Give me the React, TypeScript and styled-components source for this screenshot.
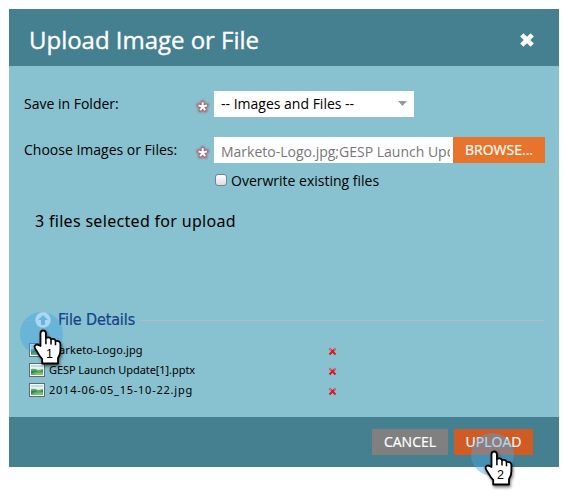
import React from "react";
import styled, { createGlobalStyle } from "styled-components";

const GlobalStyle = createGlobalStyle`
  * { box-sizing: border-box; }
  body {
    margin: 0;
    background: #fff;
    font-family: "Open Sans", "Noto Sans", sans-serif;
    color: #000;
  }
`;

const Page = styled.main`
  position: relative;
  width: 568px;
  height: 496px;
  padding: 9px;
  overflow: hidden;
`;

const Dialog = styled.section`
  display: flex;
  flex-direction: column;
  width: 550px;
  height: 458px;
  background: #88c1cf;
`;

const Header = styled.header`
  display: flex;
  align-items: center;
  justify-content: space-between;
  height: 57px;
  padding: 4px 25px 0 20px;
  background: #458091;
  color: #fff;
`;

const Title = styled.h1`
  margin: 0;
  font-size: 24px;
  line-height: 32px;
  font-weight: 400;
  letter-spacing: -0.02px;
  -webkit-text-stroke: 0.35px #fff;
`;

const IconButton = styled.button`
  display: flex;
  padding: 0;
  border: 0;
  background: none;
`;

const Body = styled.div`
  flex: 1;
  padding: 25px 14px 0 15px;
`;

const FormRow = styled.div`
  display: flex;
  height: 26px;
  margin-bottom: 20px;
`;

const Label = styled.label`
  width: 172px;
  font-size: 14px;
  line-height: 26px;
  white-space: nowrap;
`;

const Required = styled.span`
  width: 18px;
  padding-top: 8px;
  line-height: 0;
`;

const Select = styled.div`
  display: flex;
  align-items: center;
  justify-content: space-between;
  width: 200px;
  padding: 0 7px 1px;
  background: #fff;
  font-size: 14px;
`;

const FileInput = styled.div`
  width: 239px;
  padding: 3px 3px 0 7px;
  background: #fff;
`;

const FileValue = styled.div`
  overflow: hidden;
  color: #777;
  font-size: 14px;
  line-height: 23px;
  white-space: nowrap;
`;

const Button = styled.button<{ $tone: string; $width: number }>`
  width: ${(p) => p.$width}px;
  height: 26px;
  padding: 0;
  border: 0;
  background: ${(p) => p.$tone};
  color: #fff;
  font: 14px/26px "Open Sans", sans-serif;
  white-space: nowrap;
  -webkit-text-stroke: 0.2px #fff;
`;

const CheckRow = styled.label`
  display: flex;
  align-items: center;
  gap: 4px;
  height: 20px;
  margin: -13px 0 0 191px;
  font-size: 14px;
`;

const Checkbox = styled.span`
  width: 12px;
  height: 12px;
  border: 1px solid #73858c;
  border-radius: 3px;
  background: linear-gradient(#fff, #ddd);
`;

const Summary = styled.p`
  margin: 18px 0 0 11px;
  font: 16px/26px "Noto Sans", sans-serif;
  letter-spacing: 0.31px;
`;

const Details = styled.section`
  margin-top: 75px;
`;

const DetailsHeader = styled.div`
  display: flex;
  align-items: center;
  height: 22px;
`;

const Rule = styled.span<{ $width?: number }>`
  width: ${(p) => (p.$width ? `${p.$width}px` : "auto")};
  flex: ${(p) => (p.$width ? "none" : 1)};
  height: 1px;
  background: #b5b8c8;
`;

const DetailsTitle = styled.h2`
  margin: 0 4px 0 7px;
  color: #15428b;
  font: 16px/22px "DejaVu Sans Condensed", "DejaVu Sans", sans-serif;
  letter-spacing: -0.12px;
  -webkit-text-stroke: 0.2px #15428b;
`;

const FileList = styled.ul`
  margin: 9px 0 0 5px;
  padding: 0;
  list-style: none;
`;

const FileItem = styled.li`
  display: flex;
  align-items: center;
  height: 20px;
`;

const FileName = styled.span<{ $spacing: number }>`
  width: 280px;
  margin-left: 4px;
  font: 11px/18px "Noto Sans", sans-serif;
  letter-spacing: ${(p) => p.$spacing}px;
`;

const RemoveButton = styled(IconButton)`
  padding-top: 2px;
`;

const Footer = styled.footer`
  display: flex;
  justify-content: flex-end;
  gap: 6px;
  height: 50px;
  padding: 12px 26px 0 0;
  background: #458091;
`;

const Marker = styled.svg<{ $x: number; $y: number }>`
  position: absolute;
  left: ${(p) => p.$x}px;
  top: ${(p) => p.$y}px;
  overflow: visible;
  pointer-events: none;
`;

const SoftGlow = styled.path`
  filter: blur(1.1px);
`;

const Hand = styled.path`
  filter: drop-shadow(1px 2px 1.5px rgba(0, 0, 0, 0.5));
`;

const asterisk = "M6.7 7.7V3.3M6.7 7.7L2.5 6.4M6.7 7.7L10.9 6.4M6.7 7.7L4.2 11.3M6.7 7.7L9.2 11.3";

const RequiredMark = () => (
  <Required>
    <svg width="14" height="16" viewBox="0 0 14 16" overflow="visible">
      <g fill="none">
        <SoftGlow d={asterisk} stroke="#b83a44" strokeWidth="4" strokeLinecap="round" opacity=".8" />
        <path d={asterisk} stroke="#fff" strokeWidth="2" />
      </g>
    </svg>
  </Required>
);

const PictureIcon = () => (
  <svg width="16" height="14" viewBox="0 0 16 14">
    <rect x=".5" y=".5" width="15" height="13" fill="#fff" stroke="#626970" />
    <path fill="#b9dcf5" d="M2 2h12v4H2z" />
    <path fill="#e4f4ee" d="M2 4h12v3H2z" />
    <path fill="#62ad68" d="M2 6q4-1 7 1l5-1v6H2z" />
    <path fill="#2e874c" d="M2 8q4-1 6 0t6-1v2q-6-2-12 2z" />
    <path fill="#83c267" d="M5 12q4-3 9-2v2z" />
  </svg>
);

const DeleteIcon = () => (
  <svg width="7" height="7" viewBox="0 0 7 7" overflow="visible">
    <path d="M.5 .5l6 6M6.5 .5L.5 6.5" stroke="#df1720" strokeWidth="2" />
    <path d="M.4.4l2 2M6.6.4l-1.5 1.5" stroke="#d27681" strokeWidth="1.6" />
  </svg>
);

const ClickMarker = ({ x, y, step }: { x: number; y: number; step: number }) => (
  <Marker $x={x} $y={y} width="44" height="60" viewBox="0 0 44 60">
    <circle cx="21.5" cy="21.5" r="21.5" fill="#45a6e5" opacity=".45" />
    <Hand
      d="M20.5 34V21.3q0-2.8 2.7-2.8t2.7 2.8v4.6q4.5-1.3 5 1.3 4.1-.9 4.6 1.7 4.9-.5 4.9 3.4V38q0 4.6-2.4 8v5.5H22.2v-4.5c-3.2-2.7-4.5-6.8-6.8-10-2.4-3.6 1.3-5.6 3.5-3.7z"
      fill="#fff"
      stroke="#000"
      strokeWidth="1.8"
      strokeLinejoin="round"
    />
    <path d="M25.9 25.5v6.8M31 27v5.6M35.5 28.8v4.5" stroke="#000" strokeWidth="1.5" />
    <text x="29.4" y="46.4" textAnchor="middle" fontFamily="Liberation Sans" fontSize="12.5">
      {step}
    </text>
  </Marker>
);

const files = [
  { name: "Marketo-Logo.jpg", spacing: 0.1 },
  { name: "GESP Launch Update[1].pptx", spacing: -0.07 },
  { name: "2014-06-05_15-10-22.jpg", spacing: 0.76 },
];

export default function App() {
  return (
    <>
      <GlobalStyle />
      <Page>
        <Dialog>
          <Header>
            <Title>Upload Image or File</Title>
            <IconButton aria-label="Close">
              <svg width="14" height="14" viewBox="0 0 14 14">
                <path d="M1.8 1.8l10.4 10.4M12.2 1.8L1.8 12.2" stroke="#fff" strokeWidth="4.6" />
              </svg>
            </IconButton>
          </Header>
          <Body>
            <FormRow>
              <Label>Save in Folder:</Label>
              <RequiredMark />
              <Select>
                <span>-- Images and Files --</span>
                <svg width="9" height="5" viewBox="0 0 9 5">
                  <path d="M0 0h9L4.5 5z" fill="#999" />
                </svg>
              </Select>
            </FormRow>
            <FormRow>
              <Label>Choose Images or Files:</Label>
              <RequiredMark />
              <FileInput>
                <FileValue>Marketo-Logo.jpg;GESP Launch Update</FileValue>
              </FileInput>
              <Button $tone="#e8732b" $width={92}>BROWSE...</Button>
            </FormRow>
            <CheckRow>
              <Checkbox />
              <span>Overwrite existing files</span>
            </CheckRow>
            <Summary>3 files selected for upload</Summary>
            <Details>
              <DetailsHeader>
                <Rule $width={11} />
                <svg width="16" height="16" viewBox="0 0 16 16">
                  <circle cx="8" cy="8" r="7.7" fill="#fff" />
                  <path d="M8 3l5 5h-3v5H6V8H3z" fill="#88c1cf" />
                </svg>
                <DetailsTitle>File Details</DetailsTitle>
                <Rule />
              </DetailsHeader>
              <FileList>
                {files.map((file) => (
                  <FileItem key={file.name}>
                    <PictureIcon />
                    <FileName $spacing={file.spacing}>{file.name}</FileName>
                    <RemoveButton aria-label="Remove file">
                      <DeleteIcon />
                    </RemoveButton>
                  </FileItem>
                ))}
              </FileList>
            </Details>
          </Body>
          <Footer>
            <Button $tone="#808080" $width={76}>CANCEL</Button>
            <Button $tone="#d15b24" $width={79}>UPLOAD</Button>
          </Footer>
        </Dialog>
        <ClickMarker x={20} y={311.5} step={1} />
        <ClickMarker x={471} y={433} step={2} />
      </Page>
    </>
  );
}
